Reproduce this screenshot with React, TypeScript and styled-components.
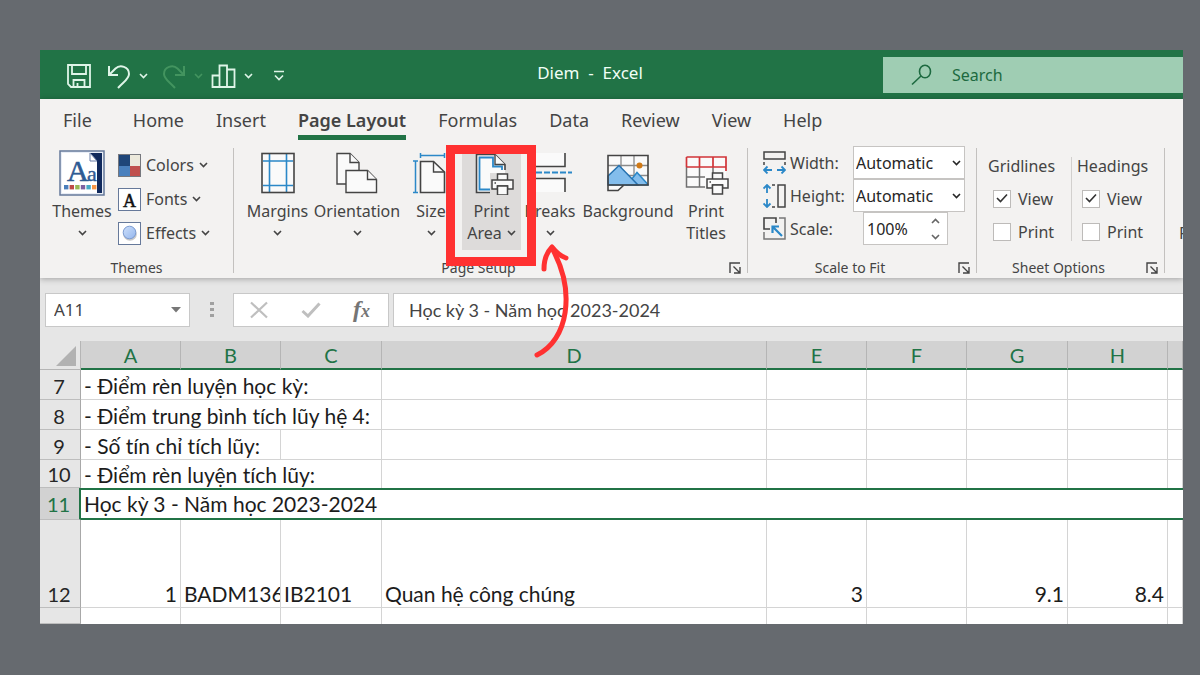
import React from "react";
import styled, { createGlobalStyle, css } from "styled-components";

const GREEN = "#217346";
const INK = "#444444";
const BLUE = "#2b88c8";
const RED = "#ff3131";
const UI_FONT = '"Noto Sans", "Open Sans", sans-serif';
const CELL_FONT = 'Lato, "Noto Sans", sans-serif';

const GlobalStyle = createGlobalStyle`
  *, *::before, *::after { box-sizing: border-box; }
  body { margin: 0; background: #666a6f; font-family: ${UI_FONT}; color: ${INK}; }
  button, input, select { font: inherit; color: inherit; margin: 0; }
  button { border: 0; padding: 0; background: none; }
  svg { display: block; flex: none; }
`;

const Page = styled.main`
  min-height: 100vh;
  padding: 50px 17px 51px 40px;
  background: #666a6f;
`;

const Window = styled.div`
  overflow: hidden;
  background: #e6e6e6;
`;

/* ---------- title bar ---------- */

const TitleBar = styled.header`
  display: flex;
  align-items: center;
  height: 49px;
  background: ${GREEN};
  color: #dff5e8;
`;

const QuickAccess = styled.div`
  display: flex;
  align-items: center;
  gap: 8px;
  width: 257px;
  padding: 2px 0 0 26px;
`;

const QuickButton = styled.button<{ $dim?: boolean; $gap?: number }>`
  display: flex;
  align-items: center;
  margin-right: ${(p) => p.$gap ?? 0}px;
  color: ${(p) => (p.$dim ? "#43945f" : "#dff5e8")};
`;

const Title = styled.h1`
  flex: 1;
  margin: 0;
  padding-bottom: 4px;
  text-align: center;
  font-size: 17px;
  font-weight: 400;
  line-height: 22px;
  white-space: pre;
  color: #f0fff6;
`;

const SearchBox = styled.label`
  display: flex;
  align-items: center;
  gap: 20px;
  width: 300px;
  height: 36px;
  padding-left: 28px;
  background: #9fcdb3;
  color: #1d6a40;
`;

const SearchInput = styled.input`
  flex: 1;
  min-width: 0;
  padding: 0;
  border: 0;
  outline: 0;
  background: transparent;
  font-size: 16px;
  &::placeholder { color: #1d6a40; opacity: 1; }
`;

/* ---------- ribbon ---------- */

const Ribbon = styled.section`
  position: relative;
  z-index: 1;
  background: #f3f2f1;
  box-shadow: 0 1px 6px rgba(0, 0, 0, 0.3);
`;

const Tabs = styled.nav`
  display: flex;
  gap: 32px;
  height: 47px;
  padding-left: 23px;
`;

const Tab = styled.button<{ $active?: boolean; $first?: boolean }>`
  height: 41px;
  margin-right: ${(p) => (p.$first ? 9 : 0)}px;
  padding-top: 6px;
  border-bottom: 5px solid ${(p) => (p.$active ? GREEN : "transparent")};
  font-size: 18px;
  font-weight: ${(p) => (p.$active ? 600 : 400)};
  line-height: 30px;
  white-space: nowrap;
`;

const Groups = styled.div`
  display: flex;
  height: 132px;
`;

const Group = styled.section<{ $width: number }>`
  display: flex;
  flex: none;
  flex-direction: column;
  width: ${(p) => p.$width}px;
`;

const Divider = styled.div`
  flex: none;
  width: 1px;
  margin: 2px 0 5px;
  background: #c3c1bf;
`;

const GroupBody = styled.div<{ $left: number }>`
  display: flex;
  height: 112px;
  padding-left: ${(p) => p.$left}px;
`;

const GroupFooter = styled.footer`
  display: flex;
  align-items: center;
  height: 20px;
`;

const GroupName = styled.h2`
  flex: 1;
  margin: 0;
  text-align: center;
  font-size: 14px;
  font-weight: 400;
  line-height: 20px;
`;

const Launcher = styled.button`
  width: 24px;
  padding-left: 6px;
`;

const TallButton = styled.button<{ $width: number; $pressed?: boolean }>`
  display: flex;
  flex: none;
  flex-direction: column;
  align-items: center;
  width: ${(p) => p.$width}px;
  height: 104px;
  font-size: 16px;
  line-height: 22px;
  white-space: nowrap;
  background: ${(p) => (p.$pressed ? "#dddbda" : "transparent")};
`;

const IconSlot = styled.span`
  display: flex;
  align-items: center;
  justify-content: center;
  height: 54px;
`;

const LabelLine = styled.span`
  display: flex;
  align-items: center;
  justify-content: center;
  gap: 5px;
  height: 22px;
`;

const SmallList = styled.div`
  display: flex;
  flex-direction: column;
  padding: 2px 0 0 1px;
`;

const SmallButton = styled.button`
  display: flex;
  align-items: center;
  gap: 5px;
  height: 34px;
  font-size: 16px;
`;

const Marked = styled.div`
  position: relative;
  flex: none;
  align-self: flex-start;
`;

const MarkerFrame = styled.span`
  position: absolute;
  z-index: 2;
  inset: -1px -15px -16px -16px;
  border: 9px solid ${RED};
  pointer-events: none;
`;

const MarkerArrow = styled.svg`
  position: absolute;
  z-index: 2;
  left: 70px;
  top: 96px;
  pointer-events: none;
`;

const FitGrid = styled.div`
  display: grid;
  grid-template-columns: 27px 63px 112px;
  grid-auto-rows: 33px;
  align-items: center;
  font-size: 16px;
`;

const Field = styled.span<{ $indent?: boolean }>`
  position: relative;
  display: flex;
  align-items: center;
  width: ${(p) => (p.$indent ? 85 : 112)}px;
  height: 33px;
  margin-left: ${(p) => (p.$indent ? 10 : 0)}px;
  border: 1px solid #c6c4c2;
  background: #fff;
  color: #262626;
  > svg { position: absolute; right: 3px; pointer-events: none; }
`;

const Select = styled.select`
  width: 100%;
  height: 100%;
  padding: 0 0 0 2px;
  border: 0;
  appearance: none;
  background: transparent;
`;

const ScaleInput = styled.input`
  width: 56px;
  padding: 0 0 0 3px;
  border: 0;
  background: transparent;
`;

const Spinner = styled.span`
  display: flex;
  flex-direction: column;
  gap: 10px;
  padding-left: 11px;
  color: #666;
`;

const OptionColumn = styled.div<{ $left: number }>`
  flex: none;
  width: 94px;
  padding: 9px 0 0 ${(p) => p.$left}px;
  font-size: 16px;
`;

const OptionTitle = styled.div`
  height: 27px;
  line-height: 22px;
`;

const OptionRow = styled.label`
  position: relative;
  display: flex;
  align-items: center;
  gap: 7px;
  height: 33px;
  padding-left: 5px;
  > svg { position: absolute; left: 8px; top: 11px; pointer-events: none; }
`;

const CheckBox = styled.input`
  width: 18px;
  height: 18px;
  border: 1px solid #bdbbb9;
  appearance: none;
  background: #fff;
  & + svg { display: none; }
  &:checked + svg { display: block; }
`;

const OptionDivider = styled.div`
  flex: none;
  width: 1px;
  height: 84px;
  margin-top: 11px;
  background: #d2d0ce;
`;

const CutOffLabel = styled.span`
  padding: 76px 0 0 14px;
  font-size: 16px;
`;

/* ---------- formula bar ---------- */

const FormulaBar = styled.div`
  display: flex;
  align-items: center;
  height: 63px;
  padding-left: 5px;
  font-size: 18px;
`;

const barBox = css`
  height: 34px;
  border: 1px solid #c8c8c8;
  background: #fff;
`;

const NameBox = styled.div`
  ${barBox}
  display: flex;
  align-items: center;
  width: 145px;
  padding-right: 8px;
`;

const NameInput = styled.input`
  flex: 1;
  min-width: 0;
  padding: 0 0 0 8px;
  border: 0;
  background: transparent;
  font-size: 17px;
`;

const Grip = styled.span`
  display: flex;
  justify-content: center;
  width: 43px;
`;

const FormulaTools = styled.div`
  ${barBox}
  display: flex;
  align-items: center;
  justify-content: space-between;
  width: 156px;
  margin-right: 4px;
  padding: 0 18px 0 15px;
`;

const FormulaInput = styled.input`
  ${barBox}
  flex: 1;
  min-width: 0;
  padding: 0 0 0 15px;
  border-right: 0;
  font-family: ${CELL_FONT};
  font-size: 18px;
  font-variant-ligatures: none;
`;

const FxGlyph = styled.span`
  font-family: "Liberation Serif", serif;
  font-size: 24px;
  font-style: italic;
  font-weight: 700;
  line-height: 28px;
  color: #757575;
  small { font-size: 18px; }
`;

/* ---------- sheet ---------- */

const Sheet = styled.table`
  width: 100%;
  table-layout: fixed;
  border-collapse: separate;
  border-spacing: 0;
  background: #fff;
  font-family: ${CELL_FONT};
  font-size: 21px;
  font-variant-ligatures: none;
  line-height: 26px;
  color: #1c1c1c;
`;

const Corner = styled.th`
  padding: 0 4px 3px 0;
  border-right: 1px solid #b5b5b5;
  border-bottom: 1px solid #b5b5b5;
  background: #e6e6e6;
  vertical-align: bottom;
  svg { margin-left: auto; }
`;

const ColumnHead = styled.th`
  height: 29px;
  padding: 0;
  border-right: 1px solid #b5b5b5;
  border-bottom: 2px solid ${GREEN};
  background: #d2d2d2;
  color: ${GREEN};
  font-size: 20px;
  font-weight: 400;
`;

const RowHead = styled.th<{ $selected?: boolean }>`
  padding: 0 2px ${(p) => (p.$selected ? 2 : 0)}px 0;
  border-right: ${(p) => (p.$selected ? `2px solid ${GREEN}` : "1px solid #a8a8a8")};
  border-bottom: 1px solid #bdbdbd;
  background: ${(p) => (p.$selected ? "#d2d2d2" : "#e6e6e6")};
  color: ${(p) => (p.$selected ? GREEN : "#262626")};
  font-size: 20px;
  font-weight: 400;
  vertical-align: bottom;
`;

const Row = styled.tr<{ $height: number }>`
  height: ${(p) => p.$height}px;
`;

const Cell = styled.td<{ $right?: boolean; $open?: boolean }>`
  padding: 0 3px;
  border-right: 1px solid #d4d4d4;
  border-bottom: ${(p) => (p.$open ? "0" : "1px solid #d4d4d4")};
  overflow: hidden;
  white-space: nowrap;
  text-align: ${(p) => (p.$right ? "right" : "left")};
  vertical-align: bottom;
`;

const SelectedCell = styled.td`
  padding: 0 3px;
  border-top: 2px solid ${GREEN};
  border-bottom: 2px solid ${GREEN};
  white-space: nowrap;
`;

/* ---------- icons ---------- */

const Chevron = ({ up = false }: { up?: boolean }) => (
  <svg width="9" height="6" viewBox="0 0 9 6" fill="none" stroke="currentColor" strokeWidth="1.6">
    <path d={up ? "M1 5 4.500 1.500 8 5" : "M1 1 4.500 4.500 8 1"} />
  </svg>
);

const SaveIcon = () => (
  <svg width="25" height="26" viewBox="0 0 25 26" fill="none" stroke="currentColor" strokeWidth="1.8">
    <path d="M2 2H24V24H5L2 21Z" />
    <path d="M6 2V11H20V2M7.500 24V17H18.500V24M11.500 20V24" />
  </svg>
);

const UndoIcon = ({ flip = false }: { flip?: boolean }) => (
  <svg width="24" height="26" viewBox="0 0 24 26" fill="none" stroke="currentColor" strokeWidth="2">
    <g transform={flip ? "translate(24 0) scale(-1 1)" : undefined}>
      <path d="M2 3V12H11" />
      <path d="M2.500 11.500 8.500 5.500C13 1.200 22 3.500 22 11C22 16 17 18.500 11 25" />
    </g>
  </svg>
);

const ChartIcon = () => (
  <svg width="25" height="26" viewBox="0 0 25 26" fill="none" stroke="currentColor" strokeWidth="1.800">
    <path d="M1.500 12.500H8.500V24H1.500ZM8.500 2.500H16V24H8.500ZM16 6.500H23.500V24H16Z" />
  </svg>
);

const CustomizeIcon = () => (
  <svg width="12" height="12" viewBox="0 0 12 12" fill="none" stroke="currentColor" strokeWidth="1.600">
    <path d="M1 1.500H11M2 5.500 6 9.500 10 5.500" />
  </svg>
);

const SearchIcon = () => (
  <svg width="21" height="22" viewBox="0 0 21 22" fill="none" stroke="currentColor" strokeWidth="1.600">
    <ellipse cx="14" cy="7.500" rx="5.500" ry="6.300" />
    <path d="M10 12 1 20.500" />
  </svg>
);

const ThemesIcon = () => (
  <svg width="46" height="46" viewBox="0 0 46 46">
    <rect x="1" y="1" width="44" height="44" fill="#e8edf6" stroke="#66799a" strokeWidth="1.500" />
    <path d="M3 3H38V43H3Z" fill="#fff" />
    <text x="28" y="31" fontFamily="Liberation Serif, serif" fontSize="22" fill="#2f5b93" stroke="#2f5b93" strokeWidth="0.400">a</text>
    <path d="M31 3H43V43H38V11Z" fill="#10295c" />
    <path d="M31 3V11H38Z" fill="#fff" stroke="#6a7fa8" />
    <text x="8" y="31" fontFamily="Liberation Serif, serif" fontSize="30" fill="#2f5b93" stroke="#2f5b93" strokeWidth="0.600">A</text>
    {["#4a7ebb", "#be4b48", "#98b954", "#7d60a0", "#46aac5", "#f79646"].map((c, i) => (
      <rect key={c} x={5 + i * 5.6} y="35" width="4.400" height="4.400" fill={c} />
    ))}
  </svg>
);

const ColorsIcon = () => (
  <svg width="23" height="23" viewBox="0 0 23 23">
    <path d="M0 0H12V12H0Z" fill="#1f4679" />
    <path d="M12 0H23V12H12Z" fill="#ece9dc" />
    <path d="M0 12H12V23H0Z" fill="#4a80bd" />
    <path d="M12 12H23V23H12Z" fill="#c0504d" />
    <rect x="0.500" y="0.500" width="22" height="22" fill="none" stroke="#76787e" />
  </svg>
);

const FontsIcon = () => (
  <svg width="23" height="23" viewBox="0 0 23 23">
    <rect x="0.500" y="0.500" width="22" height="22" fill="#fff" stroke="#66799a" />
    <text x="11.500" y="19" textAnchor="middle" fontFamily="Liberation Serif, serif" fontSize="18" fill="#111" stroke="#111" strokeWidth="0.500">A</text>
  </svg>
);

const EffectsIcon = () => (
  <svg width="23" height="23" viewBox="0 0 23 23">
    <defs>
      <linearGradient id="orb" x1="0" y1="0" x2="1" y2="1">
        <stop offset="0" stopColor="#cfe0fa" />
        <stop offset="1" stopColor="#93b6ee" />
      </linearGradient>
    </defs>
    <rect x="0.500" y="0.500" width="22" height="22" fill="#fff" stroke="#66799a" />
    <circle cx="12" cy="12" r="6.800" fill="#c9c9c9" />
    <circle cx="11.500" cy="10.500" r="6.300" fill="url(#orb)" stroke="#7b9bd2" />
  </svg>
);

const MarginsIcon = () => (
  <svg width="34" height="42" viewBox="0 0 34 42" fill="none">
    <rect x="1" y="1.500" width="32" height="39" fill="#fafafa" />
    <path d="M8.500 2V40M25.500 2V40M2 9H32M2 33.500H32" stroke={BLUE} strokeWidth="1.600" />
    <rect x="1" y="1.500" width="32" height="39" stroke={INK} strokeWidth="1.600" />
  </svg>
);

const OrientationIcon = () => (
  <svg width="42" height="42" viewBox="0 0 42 42" fill="#fafafa" stroke={INK} strokeWidth="1.400">
    <path d="M10 32H1V1.500H14L23 10.500V18" />
    <path d="M14 1.500V10.500H23" />
    <path d="M10 18.500H31.500L40.500 27.500V40.500H10Z" />
    <path d="M31.500 18.500V27.500H40.500" />
  </svg>
);

const SizeIcon = () => (
  <svg width="36" height="42" viewBox="0 0 36 42" fill="none">
    <path d="M7.500 3.500H31.500M7.500 1V6M31.500 1V6M2.500 9V40.500M0 9H5M0 40.500H5" stroke={BLUE} strokeWidth="1.500" />
    <path d="M7.500 9.500H20.500L31.500 20V40.500H7.500Z" fill="#fafafa" stroke={INK} strokeWidth="1.600" />
    <path d="M20.500 9.500V20H31.500" stroke={INK} strokeWidth="1.400" />
  </svg>
);

const PrinterShape = () => (
  <g fill="#fafafa" stroke={INK} strokeWidth="1.500">
    <path d="M6.500 7V1H16.500V7" />
    <path d="M1 7H22V16H16.500V13H6.500V16H1Z" />
    <path d="M6.500 13H16.500V22H6.500Z" />
    <path d="M3.500 10H5" />
  </g>
);

const PrintAreaIcon = () => (
  <svg width="47" height="44" viewBox="-7 0 47 44" fill="none">
    <path d="M15 41.500H1.500V3.500H20L30 13.500V22H15Z" fill="#fafafa" />
    <path d="M15 41.500H1.500V3.500H20L30 13.500V19" stroke={INK} strokeWidth="1.600" />
    <path d="M15 38.500H4.500V6.500H18V15.500H27V19" stroke={BLUE} strokeWidth="1.800" />
    <path d="M20 3.500V13.500H30" stroke={INK} strokeWidth="1.400" fill="#fafafa" />
    <g transform="translate(16 22)"><PrinterShape /></g>
  </svg>
);

const BreaksIcon = () => (
  <svg width="44" height="42" viewBox="0 0 44 42" fill="none">
    <path d="M6 1V14.500H37V1M6 40V26.500H37V40" fill="#fafafa" stroke={INK} strokeWidth="1.600" />
    <path d="M0 20.500H44" stroke={BLUE} strokeWidth="1.800" strokeDasharray="6 2" />
  </svg>
);

const BackgroundIcon = () => (
  <svg width="42" height="38" viewBox="0 0 42 38" fill="none">
    <path d="M1 1.500H41V31H17L11 36.500H1Z" fill="#fafafa" />
    <path d="M14 1.500V31M27 1.500V31M1 11.500H41M1 21.500H41" stroke="#8a8a8a" strokeWidth="1.300" />
    <path d="M20 31 30 18.500 41 30.500V31Z" fill="#83bdec" stroke={BLUE} strokeWidth="1.500" />
    <path d="M1 22 12 11.500 31 31H1Z" fill="#83bdec" stroke="#2672b0" strokeWidth="1.500" />
    <circle cx="32.500" cy="11.500" r="3" fill="#d17a16" />
    <path d="M41 31V1.500H1V36.500H11L17 31Z M1 31H41" stroke={INK} strokeWidth="1.600" />
  </svg>
);

const PrintTitlesIcon = () => (
  <svg width="46" height="46" viewBox="-2 -4 46 46" fill="none">
    <path d="M1.500 3H41V13H41V32H1.500Z" fill="#fafafa" />
    <path d="M1.500 13V33H20M14.500 13V33M28 13V20M1.500 23H20" stroke="#707070" strokeWidth="1.500" />
    <path d="M1.500 3H41V17M1.500 13H41M1.500 3V13M14.500 3V13M28 3V13" stroke="#d13438" strokeWidth="1.700" />
    <g transform="translate(21 18)"><PrinterShape /></g>
  </svg>
);

const WidthIcon = () => (
  <svg width="23" height="23" viewBox="0 0 23 23" fill="none">
    <path d="M1 1H22V8H1ZM1 11V14M22 11V14" stroke={INK} strokeWidth="1.500" />
    <path d="M1 19H9M14 19H22M4.500 15.500 1 19 4.500 22.500M18.500 15.500 22 19 18.500 22.500" stroke={BLUE} strokeWidth="1.800" />
  </svg>
);

const HeightIcon = () => (
  <svg width="23" height="24" viewBox="0 0 23 24" fill="none">
    <path d="M15 1H22V23H15ZM9 1H12M9 23H12" stroke={INK} strokeWidth="1.500" />
    <path d="M4 1V9M4 15V23M0.500 4.500 4 1 7.500 4.500M0.500 19.500 4 23 7.500 19.500" stroke={BLUE} strokeWidth="1.800" />
  </svg>
);

const ScaleIcon = () => (
  <svg width="23" height="23" viewBox="0 0 23 23" fill="none">
    <path d="M16 1H22V22H1V15" stroke="#777" strokeWidth="1.500" />
    <path d="M7 12H1V1H13V6" stroke={INK} strokeWidth="1.600" />
    <path d="M19 19 9.500 9.500M9.500 16V9.500H16" stroke={BLUE} strokeWidth="2.200" />
  </svg>
);

const LauncherIcon = () => (
  <svg width="12" height="12" viewBox="0 0 12 12" fill="none" stroke={INK} strokeWidth="1.400">
    <path d="M1 11V1H11M4.500 4.500 10.500 10.500M11 5V11H5" />
  </svg>
);

const CheckIcon = () => (
  <svg width="12" height="10" viewBox="0 0 12 10" fill="none" stroke="#333" strokeWidth="1.600">
    <path d="M1 5 4.500 8.500 11 1.500" />
  </svg>
);

/* ---------- data ---------- */

const TABS = ["File", "Home", "Insert", "Page Layout", "Formulas", "Data", "Review", "View", "Help"];
const COLUMNS = ["A", "B", "C", "D", "E", "F", "G", "H", ""];
const COLUMN_WIDTHS = [41, 100, 100, 101, 385, 100, 100, 101, 100];

type TextRow = { n: number; text: string; span: number; height: number };
const TEXT_ROWS: TextRow[] = [
  { n: 7, text: "- Điểm rèn luyện học kỳ:", span: 3, height: 30 },
  { n: 8, text: "- Điểm trung bình tích lũy hệ 4:", span: 3, height: 30 },
  { n: 9, text: "- Số tín chỉ tích lũy:", span: 2, height: 30 },
  { n: 10, text: "- Điểm rèn luyện tích lũy:", span: 3, height: 28 },
];

const SELECTED_TEXT = "Học kỳ 3 - Năm học 2023-2024";

const Footer = ({ name, launcher = true }: { name: string; launcher?: boolean }) => (
  <GroupFooter>
    <GroupName>{name}</GroupName>
    {launcher && <Launcher aria-label={`${name} settings`}><LauncherIcon /></Launcher>}
  </GroupFooter>
);

type TallProps = { icon: React.ReactNode; label: string; width: number; second?: string; menu?: boolean; pressed?: boolean };
const Tall = ({ icon, label, width, second, menu = true, pressed }: TallProps) => (
  <TallButton $width={width} $pressed={pressed}>
    <IconSlot>{icon}</IconSlot>
    <LabelLine>{label}</LabelLine>
    <LabelLine>{second}{menu && <Chevron />}</LabelLine>
  </TallButton>
);

const Options = ({ title, left }: { title: string; left: number }) => (
  <OptionColumn $left={left}>
    <OptionTitle>{title}</OptionTitle>
    <OptionRow><CheckBox type="checkbox" defaultChecked /><CheckIcon />View</OptionRow>
    <OptionRow><CheckBox type="checkbox" /><CheckIcon />Print</OptionRow>
  </OptionColumn>
);

export default function App() {
  return (
    <Page>
      <GlobalStyle />
      <Window>
        <TitleBar>
          <QuickAccess>
            <QuickButton aria-label="Save" $gap={8}><SaveIcon /></QuickButton>
            <QuickButton aria-label="Undo"><UndoIcon /></QuickButton>
            <QuickButton aria-label="Undo list" $gap={6}><Chevron /></QuickButton>
            <QuickButton aria-label="Redo" $dim><UndoIcon flip /></QuickButton>
            <QuickButton aria-label="Redo list" $dim><Chevron /></QuickButton>
            <QuickButton aria-label="Chart"><ChartIcon /></QuickButton>
            <QuickButton aria-label="Chart list" $gap={12}><Chevron /></QuickButton>
            <QuickButton aria-label="Customize toolbar"><CustomizeIcon /></QuickButton>
          </QuickAccess>
          <Title>{"Diem  -  Excel"}</Title>
          <SearchBox>
            <SearchIcon />
            <SearchInput aria-label="Search" placeholder="Search" />
          </SearchBox>
        </TitleBar>

        <Ribbon>
          <Tabs>
            {TABS.map((t, i) => (
              <Tab key={t} $active={t === "Page Layout"} $first={i === 0}>{t}</Tab>
            ))}
          </Tabs>
          <Groups>
            <Group $width={193}>
              <GroupBody $left={7}>
                <Tall icon={<ThemesIcon />} label="Themes" width={70} />
                <SmallList>
                  <SmallButton><ColorsIcon />Colors<Chevron /></SmallButton>
                  <SmallButton><FontsIcon />Fonts<Chevron /></SmallButton>
                  <SmallButton><EffectsIcon />Effects<Chevron /></SmallButton>
                </SmallList>
              </GroupBody>
              <Footer name="Themes" launcher={false} />
            </Group>
            <Divider />
            <Group $width={513}>
              <GroupBody $left={7}>
                <Tall icon={<MarginsIcon />} label="Margins" width={73} />
                <Tall icon={<OrientationIcon />} label="Orientation" width={86} />
                <Tall icon={<SizeIcon />} label="Size" width={62} />
                <Marked>
                  <Tall icon={<PrintAreaIcon />} label="Print" second="Area" width={59} pressed />
                  <MarkerFrame />
                  <MarkerArrow width="40" height="118" viewBox="0 0 40 118" fill="none" stroke={RED} strokeWidth="5" strokeLinecap="round" strokeLinejoin="round">
                    <path d="M5 113C36 98 44 50 20 6" />
                    <path d="M12 27C12 19 14 11 20 5C24 10 28 14 34 16" />
                  </MarkerArrow>
                </Marked>
                <Tall icon={<BreaksIcon />} label="Breaks" width={58} />
                <Tall icon={<BackgroundIcon />} label="Background" width={98} menu={false} />
                <Tall icon={<PrintTitlesIcon />} label="Print" second="Titles" width={58} menu={false} />
              </GroupBody>
              <Footer name="Page Setup" />
            </Group>
            <Divider />
            <Group $width={228}>
              <GroupBody $left={15}>
                <FitGrid>
                  <WidthIcon /><label htmlFor="fit-width">Width:</label>
                  <Field><Select id="fit-width"><option>Automatic</option></Select><Chevron /></Field>
                  <HeightIcon /><label htmlFor="fit-height">Height:</label>
                  <Field><Select id="fit-height"><option>Automatic</option></Select><Chevron /></Field>
                  <ScaleIcon /><label htmlFor="fit-scale">Scale:</label>
                  <Field $indent>
                    <ScaleInput id="fit-scale" defaultValue="100%" />
                    <Spinner>
                      <button aria-label="Increase scale"><Chevron up /></button>
                      <button aria-label="Decrease scale"><Chevron /></button>
                    </Spinner>
                  </Field>
                </FitGrid>
              </GroupBody>
              <Footer name="Scale to Fit" />
            </Group>
            <Divider />
            <Group $width={187}>
              <GroupBody $left={0}>
                <Options title="Gridlines" left={11} />
                <OptionDivider />
                <Options title="Headings" left={5} />
              </GroupBody>
              <Footer name="Sheet Options" />
            </Group>
            <Divider />
            <CutOffLabel>F</CutOffLabel>
          </Groups>
        </Ribbon>

        <FormulaBar>
          <NameBox>
            <NameInput aria-label="Name box" defaultValue="A11" />
            <svg width="10" height="6" viewBox="0 0 10 6"><path d="M0 0H10L5 5.500Z" fill="#777" /></svg>
          </NameBox>
          <Grip>
            <svg width="4" height="16" viewBox="0 0 4 16" fill="#a0a0a0"><path d="M0 0H4V3H0ZM0 6H4V9H0ZM0 12H4V15H0Z" /></svg>
          </Grip>
          <FormulaTools>
            <button aria-label="Cancel">
              <svg width="20" height="18" viewBox="0 0 20 18" fill="none" stroke="#bfbfbf" strokeWidth="2.200"><path d="M2 1.500 18 16.500M18 1.500 2 16.500" /></svg>
            </button>
            <button aria-label="Enter">
              <svg width="20" height="16" viewBox="0 0 20 16" fill="none" stroke="#bfbfbf" strokeWidth="3"><path d="M1.500 9 7 14 18.500 1.500" /></svg>
            </button>
            <button aria-label="Insert function"><FxGlyph>f<small>x</small></FxGlyph></button>
          </FormulaTools>
          <FormulaInput aria-label="Formula" defaultValue={SELECTED_TEXT} />
        </FormulaBar>

        <Sheet>
          <colgroup>
            {COLUMN_WIDTHS.map((w, i) => <col key={i} width={w} />)}
            <col />
          </colgroup>
          <thead>
            <tr>
              <Corner aria-label="Select all">
                <svg width="20" height="20" viewBox="0 0 20 20"><path d="M20 0V20H0Z" fill="#b2b2b2" /></svg>
              </Corner>
              {COLUMNS.map((c, i) => <ColumnHead key={i} scope="col">{c}</ColumnHead>)}
            </tr>
          </thead>
          <tbody>
            {TEXT_ROWS.map((r) => (
              <Row key={r.n} $height={r.height}>
                <RowHead scope="row">{r.n}</RowHead>
                <Cell colSpan={r.span} $open={r.n === 10}>{r.text}</Cell>
                {COLUMNS.slice(r.span).map((c, i) => <Cell key={i} $open={r.n === 10} />)}
              </Row>
            ))}
            <Row $height={32}>
              <RowHead scope="row" $selected>11</RowHead>
              <SelectedCell colSpan={9}>{SELECTED_TEXT}</SelectedCell>
            </Row>
            <Row $height={88}>
              <RowHead scope="row">12</RowHead>
              <Cell $right>1</Cell>
              <Cell>BADM1369</Cell>
              <Cell>IB2101</Cell>
              <Cell>Quan hệ công chúng</Cell>
              <Cell $right>3</Cell>
              <Cell />
              <Cell $right>9.1</Cell>
              <Cell $right>8.4</Cell>
              <Cell />
            </Row>
            <Row $height={16}>
              <RowHead />
              {COLUMNS.map((c, i) => <Cell key={i} $open />)}
            </Row>
          </tbody>
        </Sheet>
      </Window>
    </Page>
  );
}
